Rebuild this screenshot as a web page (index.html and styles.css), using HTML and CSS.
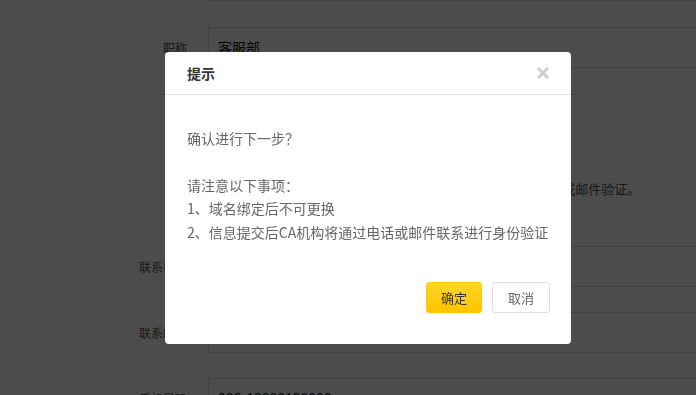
FILE: index.html
```html
<!DOCTYPE html>
<html lang="zh-CN">
<head>
<meta charset="utf-8">
<title>提示</title>
<link rel="stylesheet" href="styles.css">
</head>
<body>
<div class="page">
  <form class="form">
    <div class="row"><label class="label">单位名称</label><div class="input">某某科技有限公司</div></div>
    <div class="row"><label class="label">职称</label><div class="input">客服部</div></div>
    <div class="hint">请确保填写的联系人信息真实有效，以便CA机构及时进行电话或邮件验证。</div>
    <div class="row"><label class="label">联系电话</label><div class="input"></div></div>
    <div class="row"><label class="label">联系邮箱</label><div class="input"></div></div>
    <div class="row"><label class="label">手机号码</label><div class="input">086-13800138000</div></div>
  </form>
</div>
<div class="overlay"></div>
<div class="dialog" role="dialog">
  <div class="dialog-head">
    <span class="dialog-title">提示</span>
    <span class="dialog-close" aria-label="关闭">
      <svg width="14" height="14" viewBox="0 0 14 14"><path d="M2 2 L12 12 M12 2 L2 12" stroke="#cfcfcf" stroke-width="3" stroke-linecap="butt" fill="none"/></svg>
    </span>
  </div>
  <div class="dialog-body">
    <p class="line">确认进行下一步？</p>
    <p class="line">&nbsp;</p>
    <p class="line">请注意以下事项：</p>
    <p class="line">1、域名绑定后不可更换</p>
    <p class="line">2、信息提交后CA机构将通过电话或邮件联系进行身份验证</p>
  </div>
  <div class="dialog-foot">
    <button class="btn btn-primary" type="button">确定</button>
    <button class="btn btn-default" type="button">取消</button>
  </div>
</div>
</body>
</html>
```

FILE: styles.css
```css
* { box-sizing: border-box; }
html, body {
  margin: 0;
  padding: 0;
  width: 696px;
  height: 395px;
  overflow: hidden;
  background: #fff;
  font-family: "Noto Sans CJK SC", "Liberation Sans", sans-serif;
}
.page {
  margin-top: -40px;
}
.form {
  display: flex;
  flex-direction: column;
}
.row {
  display: flex;
  align-items: center;
  height: 41px;
  margin-bottom: 25px;
}
.row:first-child { margin-bottom: 26px; }
.label {
  flex: 0 0 187px;
  width: 187px;
  text-align: right;
  font-size: 12px;
  color: #555;
  margin-right: 21px;
}
.input {
  flex: 0 0 540px;
  width: 540px;
  height: 41px;
  border: 1px solid #d9d9d9;
  padding: 0 9px;
  line-height: 39px;
  font-size: 14px;
  color: #111;
}
.hint {
  margin: 79px 0 41px 208px;
  height: 33px;
  line-height: 33px;
  font-size: 13px;
  color: #555;
  white-space: nowrap;
}
.overlay {
  position: fixed;
  inset: 0;
  background: rgba(0, 0, 0, 0.7);
}
.dialog {
  position: fixed;
  left: 165px;
  top: 52px;
  width: 406px;
  background: #fff;
  border-radius: 4px;
  display: flex;
  flex-direction: column;
}
.dialog-head {
  height: 43px;
  display: flex;
  align-items: center;
  justify-content: space-between;
  padding: 0 21px 0 22px;
  border-bottom: 1px solid #e3e3e3;
}
.dialog-title {
  font-size: 14px;
  font-weight: 700;
  color: #333;
}
.dialog-close {
  display: flex;
  width: 14px;
  height: 14px;
}
.dialog-body {
  padding: 32px 21px 0 22px;
  font-size: 14px;
  color: #666;
}
.line {
  margin: 0;
  line-height: 23.4px;
  white-space: nowrap;
}
.dialog-foot {
  display: flex;
  justify-content: flex-end;
  gap: 10px;
  padding: 38px 21px 31px;
}
.btn {
  height: 31px;
  border-radius: 3px;
  font-family: inherit;
  font-size: 13px;
  padding: 0;
  cursor: pointer;
}
.btn-primary {
  width: 56px;
  border: 1px solid #ffc800;
  background: linear-gradient(#ffd626, #ffc500);
  color: #333;
}
.btn-default {
  width: 58px;
  border: 1px solid #dedede;
  background: #fff;
  color: #666;
}
```
